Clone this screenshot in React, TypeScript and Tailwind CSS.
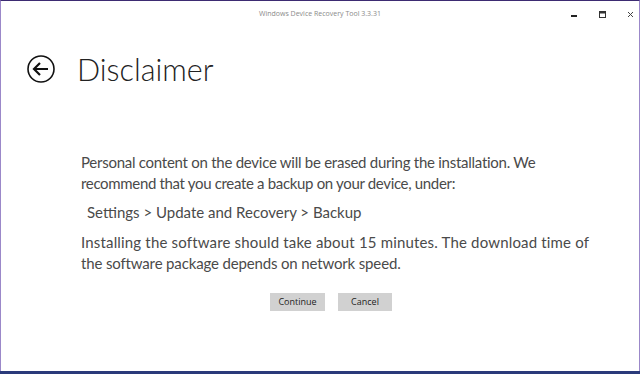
import React from "react";

export default function App() {
  return (
    <div className="flex h-[374px] w-[640px] flex-col overflow-hidden bg-[#2a3a7a]">
      <div className="flex h-[371px] flex-col border-x border-t border-x-[#9b88c9] border-t-[#3d2b72] bg-white">
        {/* title bar */}
        <div className="relative flex h-[26px] items-center justify-center">
          <span className="text-[7px] text-[#8a8a8a] [font-family:'Open_Sans',sans-serif]">
            Windows Device Recovery Tool 3.3.31
          </span>
          <div className="absolute right-[4px] top-[10px] flex items-center gap-[20px]">
            <svg width="8" height="8" viewBox="0 0 8 8">
              <rect x="0" y="4" width="6" height="2" fill="#222" />
            </svg>
            <svg width="8" height="8" viewBox="0 0 8 8">
              <rect x="0.5" y="0.5" width="6" height="6" fill="none" stroke="#333" strokeWidth="1" />
              <rect x="0.5" y="0.5" width="6" height="2" fill="#333" />
            </svg>
            <svg width="8" height="8" viewBox="0 0 8 8">
              <path d="M1 1 L6 6 M6 1 L1 6" stroke="#444" strokeWidth="1" />
            </svg>
          </div>
        </div>

        {/* header */}
        <div className="mt-[27px] flex items-center pl-[25px]">
          <svg width="30" height="30" viewBox="0 0 30 30">
            <circle cx="15" cy="15" r="13" fill="none" stroke="#111" strokeWidth="1.6" />
            <path d="M8 15 H22 M14 9 L8 15 L14 21" fill="none" stroke="#111" strokeWidth="2.2" />
          </svg>
          <h1 className="ml-[21px] text-[30.5px] font-light leading-none text-[#222] [font-family:Lato,sans-serif]">
            Disclaimer
          </h1>
        </div>

        {/* body */}
        <div className="mt-[67px] whitespace-nowrap pl-[80px] text-[15px] leading-[21px] text-[#4a4a4a] [font-family:Lato,sans-serif]">
          <p>
            <span className="block tracking-[-0.26px]">
              Personal content on the device will be erased during the installation. We
            </span>
            <span className="block tracking-[-0.33px]">
              recommend that you create a backup on your device, under:
            </span>
          </p>
          <p className="mt-[8px] pl-[6px]">Settings &gt; Update and Recovery &gt; Backup</p>
          <p className="mt-[9px]">
            <span className="block tracking-[0.17px]">
              Installing the software should take about 15 minutes. The download time of
            </span>
            <span className="block tracking-[-0.15px]">
              the software package depends on network speed.
            </span>
          </p>
        </div>

        <div className="mt-[19px] flex justify-center gap-[13px] pl-[22px]">
          <button className="h-[18px] w-[55px] bg-[#d1d1d1] text-[9px] text-[#222] [font-family:'Open_Sans',sans-serif]">
            Continue
          </button>
          <button className="h-[18px] w-[54px] bg-[#d1d1d1] text-[9px] text-[#222] [font-family:'Open_Sans',sans-serif]">
            Cancel
          </button>
        </div>
      </div>
    </div>
  );
}
